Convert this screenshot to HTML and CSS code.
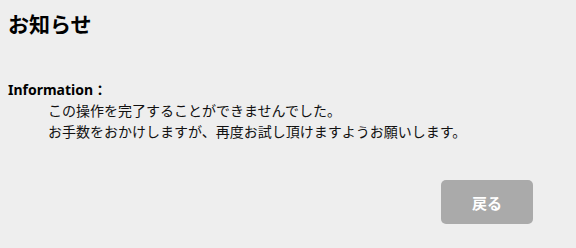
FILE: index.html
```html
<!DOCTYPE html>
<html lang="ja">
<head>
<meta charset="utf-8">
<link rel="stylesheet" href="styles.css">
</head>
<body>
<div class="page">
  <h1 class="title">お知らせ</h1>
  <div class="info">
    <div class="info-label">Information：</div>
    <div class="info-body">
      <p>この操作を完了することができませんでした。</p>
      <p>お手数をおかけしますが、再度お試し頂けますようお願いします。</p>
    </div>
  </div>
  <div class="actions">
    <button class="back-btn" type="button">戻る</button>
  </div>
</div>
</body>
</html>
```
FILE: styles.css
```css
html, body {
  margin: 0;
  padding: 0;
  background: #eeeeee;
}
body {
  font-family: "Noto Sans", "Noto Sans CJK JP", sans-serif;
  color: #111;
  width: 576px;
  height: 248px;
  overflow: hidden;
}
.page {
  padding: 8px 8px 0 8px;
}
.title {
  margin: 0;
  font-size: 21px;
  font-weight: bold;
  line-height: 32px;
  color: #000;
}
.info {
  margin-top: 39px;
}
.info-label {
  font-size: 14px;
  font-weight: bold;
  line-height: 21px;
  color: #000;
}
.info-body {
  padding-left: 40px;
  font-size: 14px;
  line-height: 21px;
}
.info-body p {
  margin: 0;
}
.actions {
  display: flex;
  justify-content: flex-end;
  padding-right: 35px;
  margin-top: 38px;
}
.back-btn {
  width: 92px;
  height: 44px;
  border: none;
  border-radius: 5px;
  background: #aaaaaa;
  color: #fff;
  font-family: "Noto Sans", "Noto Sans CJK JP", sans-serif;
  font-size: 15px;
  font-weight: bold;
}
```
